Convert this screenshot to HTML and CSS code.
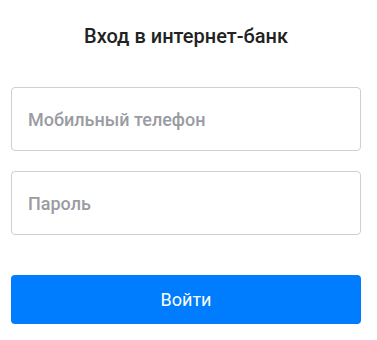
FILE: index.html
```html
<!DOCTYPE html>
<html lang="ru">
<head>
    <meta charset="UTF-8">
    <meta name="viewport" content="width=device-width, initial-scale=1.0">
    <title>Вход в интернет-банк</title>
    <link rel="stylesheet" href="styles.css">
</head>
<body>
    <div class="login">
        <h1 class="login-title">Вход в интернет-банк</h1>
        <form class="login-form">
            <input class="field" type="tel" placeholder="Мобильный телефон">
            <input class="field" type="password" placeholder="Пароль">
            <button class="submit" type="button">Войти</button>
        </form>
    </div>
</body>
</html>
```

FILE: styles.css
```css
body {
    font-family: Roboto, 'Noto Sans', sans-serif;
    margin: 0;
    background: #fff;
}
.login {
    width: 350px;
    margin-left: 11px;
}
.login-title {
    margin: 0;
    padding-top: 24px;
    height: 87px;
    box-sizing: border-box;
    text-align: center;
    font-size: 20px;
    font-weight: 500;
    line-height: 24px;
    color: #222;
}
.login-form {
    display: flex;
    flex-direction: column;
}
.field {
    height: 64px;
    box-sizing: border-box;
    border: 1px solid #cfcfd2;
    border-radius: 4px;
    padding: 0 16px;
    margin-bottom: 20px;
    font-family: inherit;
    font-size: 18px;
    color: #222;
    outline: none;
}
.field::placeholder {
    color: #9a9ca3;
    font-weight: 500;
}
.submit {
    margin-top: 20px;
    height: 49px;
    border: none;
    border-radius: 4px;
    background: #007dfe;
    color: #fff;
    font-family: inherit;
    font-size: 18px;
    cursor: pointer;
}
```
